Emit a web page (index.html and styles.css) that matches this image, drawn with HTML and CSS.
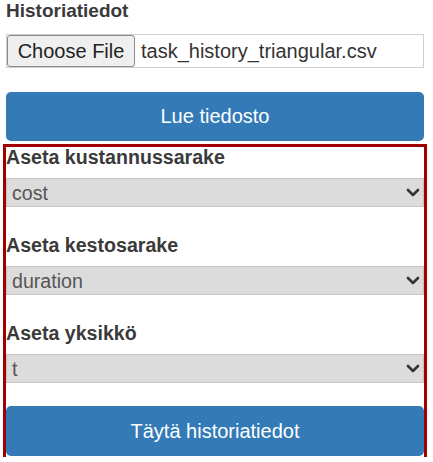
FILE: index.html
```html
<!DOCTYPE html>
<html lang="fi">
<head>
<meta charset="utf-8">
<title>Historiatiedot</title>
<link rel="stylesheet" href="styles.css">
</head>
<body>
<div class="page">
  <h3 class="title">Historiatiedot</h3>
  <div class="file-field">
    <span class="file-btn">Choose File</span>
    <span class="file-name">task_history_triangular.csv</span>
  </div>
  <button class="btn btn-read" type="button">Lue tiedosto</button>
  <div class="settings">
    <label class="field-label">Aseta kustannussarake</label>
    <div class="select-wrap">
      <select class="select"><option>cost</option></select>
      <svg class="chev" viewBox="0 0 14 9" width="14" height="9"><path d="M2 2 L7 7 L12 2" fill="none" stroke="#333" stroke-width="2.6" stroke-linecap="round" stroke-linejoin="round"/></svg>
    </div>
    <label class="field-label gap">Aseta kestosarake</label>
    <div class="select-wrap">
      <select class="select"><option>duration</option></select>
      <svg class="chev" viewBox="0 0 14 9" width="14" height="9"><path d="M2 2 L7 7 L12 2" fill="none" stroke="#333" stroke-width="2.6" stroke-linecap="round" stroke-linejoin="round"/></svg>
    </div>
    <label class="field-label gap">Aseta yksikkö</label>
    <div class="select-wrap">
      <select class="select"><option>t</option></select>
      <svg class="chev" viewBox="0 0 14 9" width="14" height="9"><path d="M2 2 L7 7 L12 2" fill="none" stroke="#333" stroke-width="2.6" stroke-linecap="round" stroke-linejoin="round"/></svg>
    </div>
    <button class="btn btn-fill" type="button">Täytä historiatiedot</button>
  </div>
</div>
</body>
</html>
```
FILE: styles.css
```css
html, body {
  margin: 0;
  padding: 0;
  background: #fff;
}
body {
  font-family: "Liberation Sans", Arial, sans-serif;
  color: #333;
}
.page {
  width: 418px;
  margin-left: 6px;
  display: flex;
  flex-direction: column;
}
.title {
  margin: 0;
  font-size: 19px;
  line-height: 22px;
  font-weight: bold;
  color: #3a3a3a;
}
.file-field {
  margin-top: 12px;
  height: 34px;
  box-sizing: border-box;
  border: 1px solid #cfcfcf;
  display: flex;
  align-items: stretch;
  font-size: 20px;
}
.file-btn {
  width: 128px;
  box-sizing: border-box;
  background: #efefef;
  border: 1px solid #8a8a8a;
  border-radius: 3px;
  color: #222;
  display: flex;
  align-items: center;
  justify-content: center;
  padding-top: 1px;
}
.file-name {
  margin-left: 6px;
  color: #333;
  display: flex;
  align-items: center;
  padding-top: 1px;
}
.btn {
  display: block;
  width: 100%;
  border: none;
  border-radius: 5px;
  background: #337ab7;
  color: #fff;
  font-family: "Liberation Sans", Arial, sans-serif;
  font-size: 20px;
  padding: 0;
  margin: 0;
}
.btn-read {
  margin-top: 24px;
  height: 48.5px;
}
.settings {
  margin-top: 6.5px;
  outline: 3.5px solid #a00000;
  display: flex;
  flex-direction: column;
  padding-bottom: 1px;
}
.field-label {
  display: block;
  font-size: 19.6px;
  line-height: 20px;
  font-weight: bold;
  color: #3a3a3a;
}
.field-label.gap {
  margin-top: 28px;
}
.select-wrap {
  margin-top: 11px;
  position: relative;
  height: 29px;
}
.select {
  -webkit-appearance: none;
  appearance: none;
  width: 100%;
  height: 29px;
  margin: 0;
  box-sizing: border-box;
  border: 1px solid #c4c4c4;
  border-radius: 0;
  background: #dcdcdc;
  color: #555;
  font-family: "Liberation Sans", Arial, sans-serif;
  font-size: 19.6px;
  padding: 0 0 0 5px;
}
.chev {
  position: absolute;
  right: 4px;
  top: 10px;
  pointer-events: none;
}
.btn-fill {
  margin-top: 23px;
  height: 50px;
}
```
